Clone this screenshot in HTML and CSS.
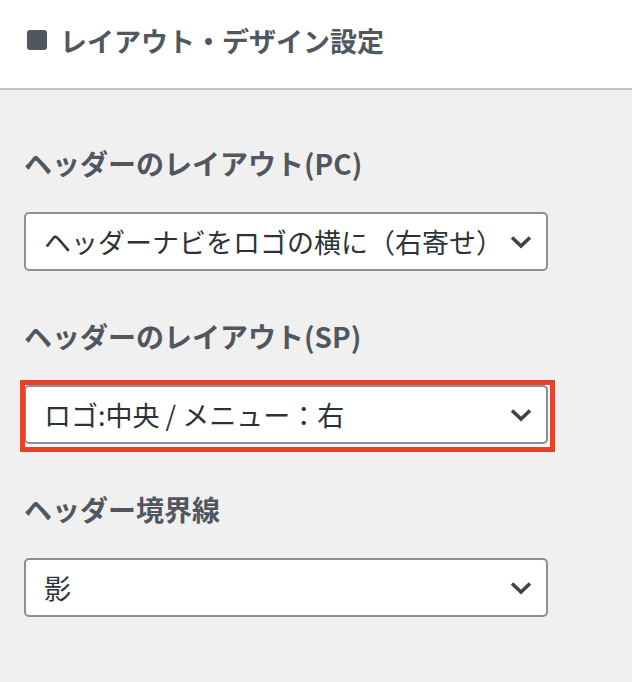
FILE: index.html
```html
<!DOCTYPE html>
<html lang="ja">
<head>
<meta charset="utf-8">
<link rel="stylesheet" href="styles.css">
</head>
<body>
<header class="section-head">
  <span class="square"></span>
  <h1 class="section-title">レイアウト・デザイン設定</h1>
</header>
<main class="controls">
  <div class="control">
    <label class="control-label">ヘッダーのレイアウト(PC)</label>
    <div class="select">
      <span class="select-text">ヘッダーナビをロゴの横に（右寄せ）</span>
      <svg class="chevron" viewBox="0 0 22 14" width="22" height="14"><path d="M2 2.5 L11 11 L20 2.5" fill="none" stroke="#3c434a" stroke-width="3.5"/></svg>
    </div>
  </div>
  <div class="control">
    <label class="control-label">ヘッダーのレイアウト(SP)</label>
    <div class="select select-highlight">
      <span class="select-text">ロゴ:中央 / メニュー：右</span>
      <svg class="chevron" viewBox="0 0 22 14" width="22" height="14"><path d="M2 2.5 L11 11 L20 2.5" fill="none" stroke="#3c434a" stroke-width="3.5"/></svg>
    </div>
  </div>
  <div class="control">
    <label class="control-label">ヘッダー境界線</label>
    <div class="select">
      <span class="select-text">影</span>
      <svg class="chevron" viewBox="0 0 22 14" width="22" height="14"><path d="M2 2.5 L11 11 L20 2.5" fill="none" stroke="#3c434a" stroke-width="3.5"/></svg>
    </div>
  </div>
</main>
</body>
</html>
```
FILE: styles.css
```css
html, body {
  margin: 0;
  padding: 0;
  background: #f0f0f1;
  font-family: "Noto Sans CJK JP", "Noto Sans", sans-serif;
}
.section-head {
  box-sizing: border-box;
  height: 90px;
  background: #fff;
  border-bottom: 2px solid #c3c4c7;
  display: flex;
  align-items: center;
  padding: 0 0 8px 27px;
}
.square {
  width: 20px;
  height: 20px;
  background: #50575e;
  border-radius: 3px;
  margin-right: 13px;
  flex: none;
}
.section-title {
  margin: 0;
  font-size: 27px;
  font-weight: 700;
  color: #50575e;
  line-height: 1;
}
.controls {
  padding: 56px 24px 0 24px;
}
.control {
  margin-bottom: 48px;
}
.control-label {
  display: block;
  font-size: 28px;
  font-weight: 700;
  color: #50575e;
  line-height: 34px;
  margin-bottom: 32px;
}
.select {
  position: relative;
  box-sizing: border-box;
  width: 524px;
  height: 59px;
  background: #fff;
  border: 2px solid #8c8f94;
  border-radius: 5px;
  display: flex;
  align-items: center;
  padding: 0 14px 0 18px;
  color: #2c3338;
}
.select-text {
  flex: 1;
  min-width: 0;
  font-size: 27px;
  white-space: nowrap;
  overflow: hidden;
}
.chevron {
  flex: none;
  display: block;
}
.select-highlight::after {
  content: "";
  position: absolute;
  left: -6px;
  top: -7px;
  right: -9px;
  bottom: -10px;
  border: 5px solid #e8412c;
  box-shadow: inset -2px -3px 0 #fff;
  pointer-events: none;
}
```
